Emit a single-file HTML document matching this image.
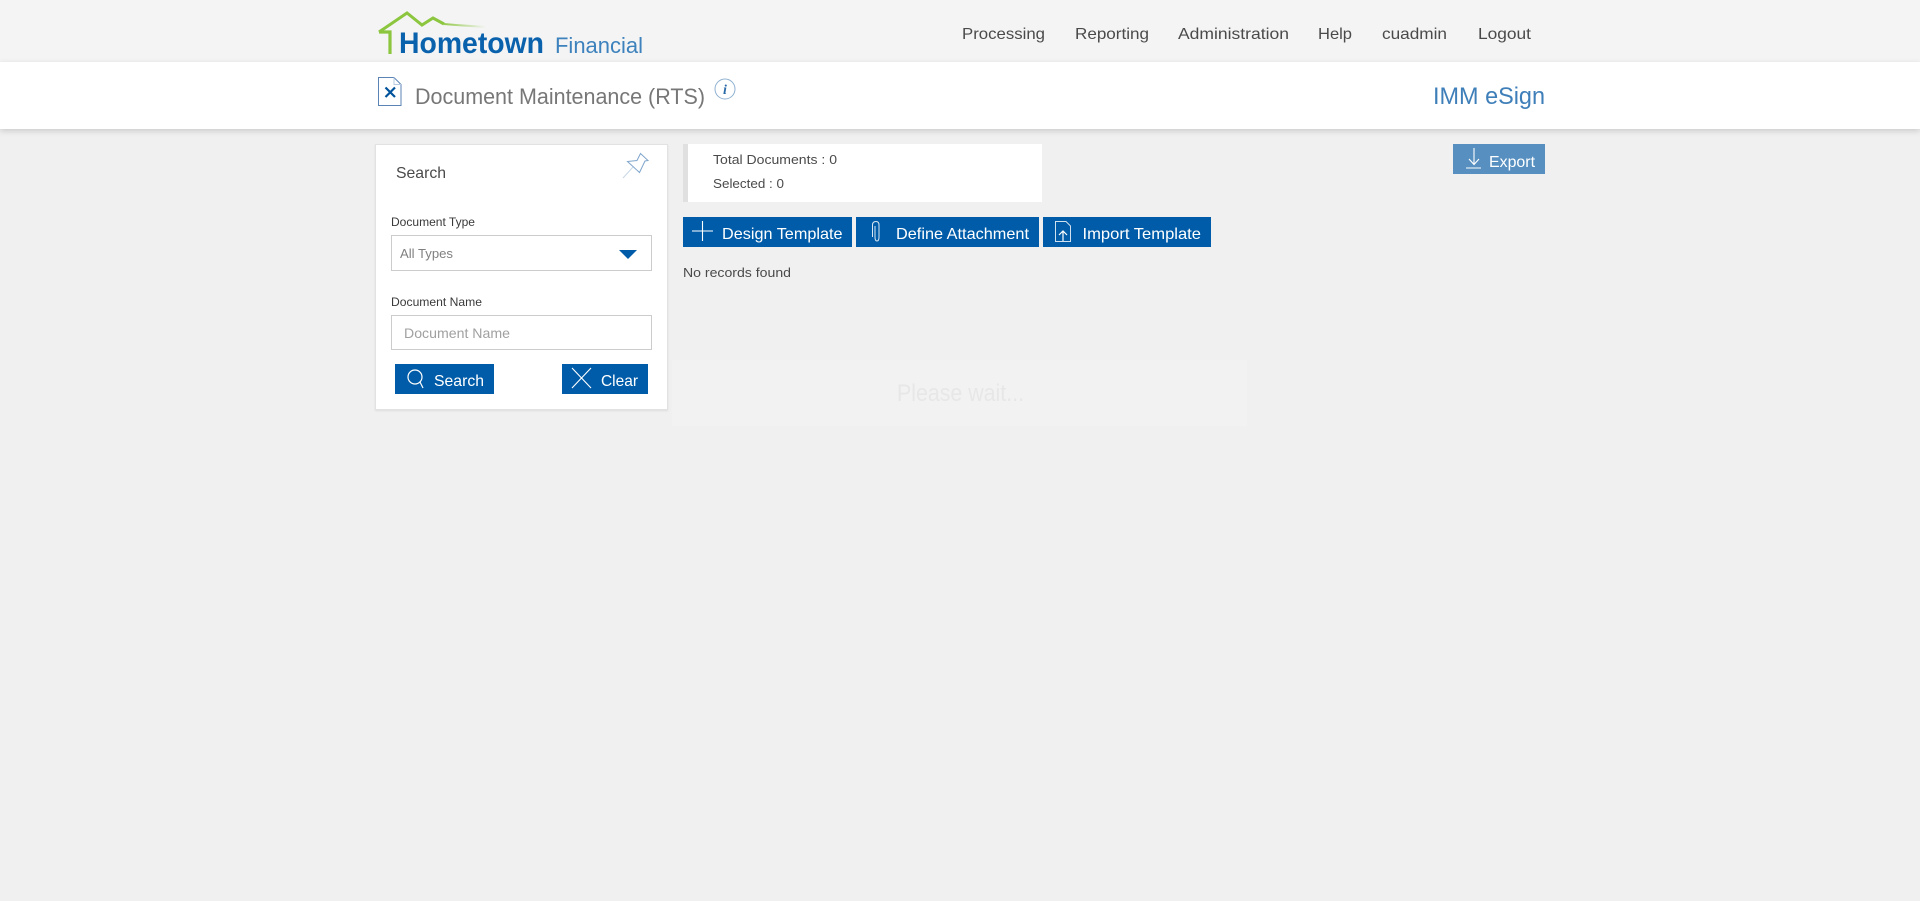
<!DOCTYPE html>
<html lang="en"><head><meta charset="utf-8"><title>Document Maintenance (RTS)</title>
<style>
html,body{margin:0;padding:0;width:1920px;height:901px;overflow:hidden;background:#f0f0f0;font-family:"Liberation Sans",sans-serif}
div{position:absolute;box-sizing:border-box}
svg{position:absolute;left:0;top:0}
text{font-family:"Liberation Sans",sans-serif}
</style></head><body>
<div style="left:0;top:0;width:1920px;height:62px;background:#f4f4f4"></div>
<div style="left:0;top:62px;width:1920px;height:67px;background:#fff;box-shadow:0 2px 6px rgba(0,0,0,.16)"></div>
<div style="left:375px;top:144px;width:293px;height:266px;background:#fff;border:1px solid #e2e2e2;box-shadow:0 1px 2px rgba(0,0,0,.08)"></div>
<div style="left:391px;top:235px;width:261px;height:36px;background:#fff;border:1px solid #ccc"></div>
<div style="left:391px;top:315px;width:261px;height:35px;background:#fff;border:1px solid #ccc"></div>
<div style="left:395px;top:364px;width:99px;height:30px;background:#005ca8"></div>
<div style="left:562px;top:364px;width:86px;height:30px;background:#005ca8"></div>
<div style="left:683px;top:144px;width:359px;height:58px;background:#fff;border-left:5px solid #e0e0e0"></div>
<div style="left:683px;top:217px;width:169px;height:30px;background:#005ca8"></div>
<div style="left:856px;top:217px;width:183px;height:30px;background:#005ca8"></div>
<div style="left:1043px;top:217px;width:168px;height:30px;background:#005ca8"></div>
<div style="left:1453px;top:144px;width:92px;height:30px;background:#568fc0"></div>
<div style="left:672px;top:360px;width:575px;height:66px;background:#f2f2f2"></div>

<svg width="1920" height="901" viewBox="0 0 1920 901" xmlns="http://www.w3.org/2000/svg">
<defs><linearGradient id="rf" gradientUnits="userSpaceOnUse" x1="440" y1="0" x2="486" y2="0"><stop offset="0" stop-color="#8cc63f"/><stop offset="1" stop-color="#8cc63f" stop-opacity="0"/></linearGradient></defs>

<!-- logo -->
<polyline points="379,32 407,13 422,25 433,18 444,24" fill="none" stroke="#8cc63f" stroke-width="3"/>
<polyline points="444,24 456,25 486,27" fill="none" stroke="url(#rf)" stroke-width="2"/>
<polyline points="379,32 390,32 390,54" fill="none" stroke="#8cc63f" stroke-width="3.2"/>
<text x="399" y="53" font-size="30" font-weight="700" fill="#0a62ad" textLength="145" lengthAdjust="spacingAndGlyphs">Hometown</text>
<text x="555" y="53" font-size="22" fill="#3d82bd" textLength="88" lengthAdjust="spacingAndGlyphs">Financial</text>

<!-- nav -->
<g font-size="16" fill="#4a4a4a">
<text x="962" y="39" textLength="83" lengthAdjust="spacingAndGlyphs">Processing</text>
<text x="1075" y="39" textLength="74" lengthAdjust="spacingAndGlyphs">Reporting</text>
<text x="1178" y="39" textLength="111" lengthAdjust="spacingAndGlyphs">Administration</text>
<text x="1318" y="39" textLength="34" lengthAdjust="spacingAndGlyphs">Help</text>
<text x="1382" y="39" textLength="65" lengthAdjust="spacingAndGlyphs">cuadmin</text>
<text x="1478" y="39" textLength="53" lengthAdjust="spacingAndGlyphs">Logout</text>
</g>

<!-- page title -->
<path d="M378.5 77.5H394L401 84.5V105.5H378.5Z" fill="#fff" stroke="#5b84b5" stroke-width="1"/>
<path d="M394 77.5V84.5H401" fill="none" stroke="#b5cbe1" stroke-width="1"/>
<path d="M385.5 87.5L395 97M395 87.5L385.5 97" stroke="#00529b" stroke-width="2.2" fill="none"/>
<text x="415" y="104" font-size="22" fill="#777" textLength="290" lengthAdjust="spacingAndGlyphs">Document Maintenance (RTS)</text>
<circle cx="725" cy="89" r="10" fill="none" stroke="#8fb1d1" stroke-width="1"/>
<text x="725" y="94" font-size="14" font-weight="700" font-style="italic" fill="#2a6aa8" text-anchor="middle" style="font-family:'Liberation Serif',serif">i</text>
<text x="1433" y="104" font-size="24" fill="#3f7fb9" textLength="112" lengthAdjust="spacingAndGlyphs">IMM eSign</text>

<!-- search card -->
<text x="396" y="178" font-size="16" fill="#4a4a4a" textLength="50" lengthAdjust="spacingAndGlyphs">Search</text>
<path d="M640.5 153.5L648 160.5L645 161L639.5 172.5L627.5 161.5L637 160.5Z" fill="none" stroke="#7fa5cb" stroke-width="1"/>
<path d="M633 167L623 178" fill="none" stroke="#c9d8e7" stroke-width="1"/>
<text x="391" y="226" font-size="12" fill="#3a3a3a" textLength="84" lengthAdjust="spacingAndGlyphs">Document Type</text>
<text x="400" y="258" font-size="13" fill="#808080" textLength="53" lengthAdjust="spacingAndGlyphs">All Types</text>
<path d="M619 250H637L628 259Z" fill="#005ca8"/>
<text x="391" y="306" font-size="12" fill="#3a3a3a" textLength="91" lengthAdjust="spacingAndGlyphs">Document Name</text>
<text x="404" y="338" font-size="14" fill="#a0a0a0" textLength="106" lengthAdjust="spacingAndGlyphs">Document Name</text>
<circle cx="415" cy="377" r="7" fill="none" stroke="#fff" stroke-width="1.2"/>
<path d="M420 382L423 388" stroke="#fff" stroke-width="1.2" fill="none"/>
<text x="434" y="386" font-size="16" fill="#fff" textLength="50" lengthAdjust="spacingAndGlyphs">Search</text>
<path d="M572 368L591 388M591 368L572 388" stroke="#fff" stroke-width="1.1" fill="none"/>
<text x="601" y="386" font-size="16" fill="#fff" textLength="37" lengthAdjust="spacingAndGlyphs">Clear</text>

<!-- summary -->
<text x="713" y="164" font-size="13" fill="#4a4a4a" textLength="124" lengthAdjust="spacingAndGlyphs">Total Documents : 0</text>
<text x="713" y="188" font-size="13" fill="#4a4a4a" textLength="71" lengthAdjust="spacingAndGlyphs">Selected : 0</text>

<!-- action buttons -->
<path d="M692 231H713M702.5 221V241" stroke="#fff" stroke-width="1.1" fill="none"/>
<text x="722" y="239" font-size="16" fill="#fff" textLength="120.5" lengthAdjust="spacingAndGlyphs">Design Template</text>
<path d="M875 226V237Q875 241 877 241Q879 241 879 237V225Q879 221.5 876 221.5Q872.5 221.5 872.5 225V237" fill="none" stroke="#dbe7f3" stroke-width="1"/>
<text x="896" y="239" font-size="16" fill="#fff" textLength="133" lengthAdjust="spacingAndGlyphs">Define Attachment</text>
<path d="M1055.5 221.5H1066L1070.5 226V241.5H1055.5Z" fill="none" stroke="#cfe0ef" stroke-width="1"/>
<path d="M1063 241V232M1059 235L1063 231L1067 235" fill="none" stroke="#fff" stroke-width="1.2"/>
<text x="1082.5" y="239" font-size="16" fill="#fff" textLength="118.5" lengthAdjust="spacingAndGlyphs">Import Template</text>
<text x="683" y="277" font-size="13" fill="#4a4a4a" textLength="108" lengthAdjust="spacingAndGlyphs">No records found</text>

<!-- export -->
<path d="M1474 148V164M1469 159L1474 164.5L1479 159M1466 168H1481" fill="none" stroke="#fff" stroke-width="1.1"/>
<text x="1489" y="167" font-size="16" fill="#fff" textLength="46" lengthAdjust="spacingAndGlyphs">Export</text>

<!-- please wait -->
<text x="897" y="401" font-size="24" fill="#e7e7e7" textLength="127" lengthAdjust="spacingAndGlyphs">Please wait...</text>
</svg>
</body></html>
